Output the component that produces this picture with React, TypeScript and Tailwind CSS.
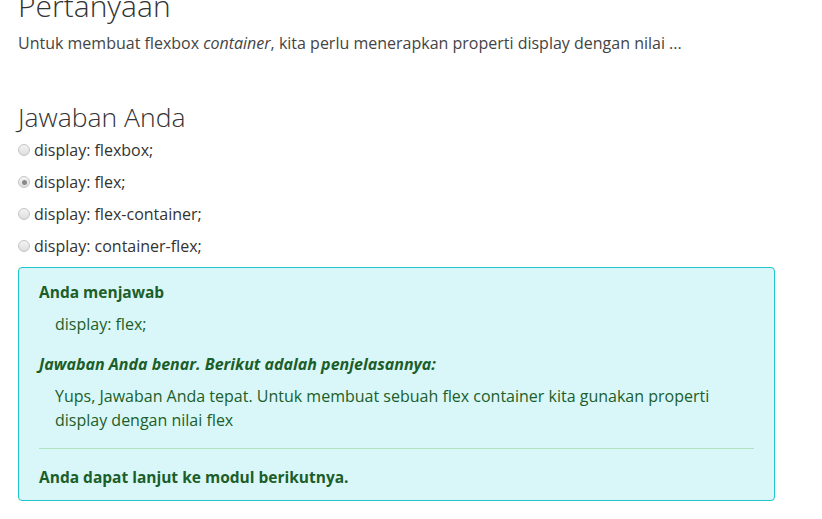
const options = [
  { id: 1, label: "display: flexbox;", checked: false },
  { id: 2, label: "display: flex;", checked: true },
  { id: 3, label: "display: flex-container;", checked: false },
  { id: 4, label: "display: container-flex;", checked: false },
]

const Radio = ({ checked }: { checked: boolean }) => (
  <span className="w-[12px] h-[12px] rounded-full border border-[#c4c4c4] bg-gradient-to-b from-[#f4f4f4] to-[#dedede] flex items-center justify-center shrink-0">
    {checked && <span className="w-[5px] h-[5px] rounded-full bg-[#8a8a8a]" />}
  </span>
)

export default function App() {
  return (
    <div className="min-h-screen bg-white overflow-hidden font-['Open_Sans',sans-serif]">
      <div className="px-[18px] -mt-[12px] w-[793px]">
        <h2 className="text-[30px] leading-[36px] font-light text-[#333]">Pertanyaan</h2>
        <p className="mt-[7px] text-[16px] leading-[24px] text-[#444]">
          Untuk membuat flexbox <em>container</em>, kita perlu menerapkan properti display dengan nilai ...
        </p>

        <h3 className="mt-[46px] text-[26.5px] leading-[32px] font-light text-[#333]">Jawaban Anda</h3>
        <div className="mt-[5px] flex flex-col gap-[8px]">
          {options.map((o) => (
            <label key={o.id} className="flex items-center gap-[4px] text-[16px] leading-[24px] text-[#333]">
              <Radio checked={o.checked} />
              {o.label}
            </label>
          ))}
        </div>

        <div className="mt-[9px] border border-[#1ec6cb] bg-[#d9f7f8] rounded-[4px] px-[20px] pt-[12px] pb-[11px] text-[#1b5e2a] text-[16px] leading-[24px]">
          <div className="font-bold text-[15.5px]">Anda menjawab</div>
          <div className="mt-[8px] pl-[16px]">display: flex;</div>
          <div className="mt-[16px] font-bold italic">Jawaban Anda benar. Berikut adalah penjelasannya:</div>
          <p className="mt-[8px] pl-[16px]">
            Yups, Jawaban Anda tepat. Untuk membuat sebuah flex container kita gunakan properti
            <br />
            display dengan nilai flex
          </p>
          <hr className="mt-[16px] border-0 border-t border-[#b0e3bd]" />
          <div className="mt-[16px] font-bold text-[15.5px]">Anda dapat lanjut ke modul berikutnya.</div>
        </div>
      </div>
    </div>
  )
}
